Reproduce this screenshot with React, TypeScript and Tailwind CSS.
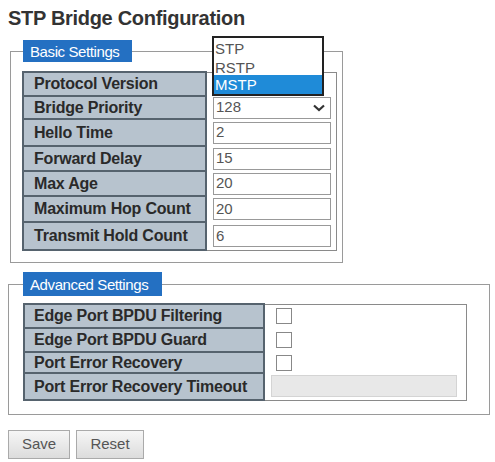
import React from 'react';

const BASIC_ROWS = [
  { label: 'Protocol Version', value: '', kind: 'proto', h: 'h-[24px]' },
  { label: 'Bridge Priority', value: '128', kind: 'select', h: 'h-[23px]' },
  { label: 'Hello Time', value: '2', kind: 'input', h: 'h-[27px]' },
  { label: 'Forward Delay', value: '15', kind: 'input', h: 'h-[25px]' },
  { label: 'Max Age', value: '20', kind: 'input', h: 'h-[25px]' },
  { label: 'Maximum Hop Count', value: '20', kind: 'input', h: 'h-[26px]' },
  { label: 'Transmit Hold Count', value: '6', kind: 'input', h: 'h-[28px]' },
];

const ADVANCED_ROWS = [
  { label: 'Edge Port BPDU Filtering', kind: 'check', h: 'h-[24px]' },
  { label: 'Edge Port BPDU Guard', kind: 'check', h: 'h-[24px]' },
  { label: 'Port Error Recovery', kind: 'check', h: 'h-[21px]' },
  { label: 'Port Error Recovery Timeout', kind: 'disabled', h: 'h-[27px]' },
];

function Legend({ children, className }: { children: React.ReactNode; className: string }) {
  return (
    <legend className={`bg-[#2470c2] text-white text-[15px] leading-none tracking-[-0.4px] px-[7px] ${className}`}>
      {children}
    </legend>
  );
}

function ProtocolList() {
  // open dropdown list overlaying the select
  return (
    <div className="absolute left-[5px] bottom-0 w-[112px] h-[60px] bg-white border-2 border-[#222] flex flex-col text-[15px] leading-none text-[#555] z-10">
      <div className="h-[18px] pl-[1px] flex items-end">STP</div>
      <div className="h-[19px] pl-[1px] flex items-end">RSTP</div>
      <div className="flex-1 pl-[1px] flex items-center bg-[#1f8bd8] text-white">MSTP</div>
    </div>
  );
}

export default function App() {
  return (
    <div className="w-[495px] h-[462px] bg-white pl-2 pt-[5px] overflow-hidden" style={{ fontFamily: '"Liberation Sans", Arial, sans-serif' }}>
      <h1 className="text-[20px] font-bold text-[#333] leading-[26px] tracking-[-0.3px]">STP Bridge Configuration</h1>

      {/* Basic settings */}
      <fieldset className="mt-[9px] ml-[2px] w-[333px] border border-[#9a9a9a] pl-[11px] pb-[11px]">
        <Legend className="ml-[1px] h-[22px] w-[109px] pt-[4px]">Basic Settings</Legend>
        <table className="mt-[9px] w-[315px] border-collapse border border-[#8a8a8a]">
          <tbody>
            {BASIC_ROWS.map(r => (
              <tr key={r.label} className={r.h}>
                <td className="w-[183px] bg-[#b7c3ce] border-2 border-[#56636e] pl-[10px] text-[16px] font-bold text-[#2a2a2a] leading-none whitespace-nowrap tracking-[-0.2px]">{r.label}</td>
                <td className="relative bg-white pl-[6px] pr-[5px] border-l-2 border-[#56636e]">
                  {r.kind === 'proto' && <ProtocolList />}
                  {r.kind === 'select' && (
                    <div className="h-[22px] border border-[#999] flex items-center justify-between px-[2px] text-[15px] text-[#555]">
                      <span>{r.value}</span>
                      <svg width="12" height="8" viewBox="0 0 12 8" className="mr-[3px]">
                        <path d="M1 1.5 L6 6 L11 1.5" fill="none" stroke="#333" strokeWidth="2.2" />
                      </svg>
                    </div>
                  )}
                  {r.kind === 'input' && (
                    <div className="h-[22px] border border-[#999] flex items-center px-[2px] text-[15px] text-[#555]">{r.value}</div>
                  )}
                </td>
              </tr>
            ))}
          </tbody>
        </table>
      </fieldset>

      {/* Advanced settings */}
      <fieldset className="mt-[9px] w-[482px] border border-[#9a9a9a] pl-[14px] pb-[13px]">
        <Legend className="ml-0 h-[24px] w-[139px] pt-[5px]">Advanced Settings</Legend>
        <table className="mt-[7px] w-[444px] border-collapse border border-[#8a8a8a]">
          <tbody>
            {ADVANCED_ROWS.map(r => (
              <tr key={r.label} className={r.h}>
                <td className="w-[240px] bg-[#b7c3ce] border-2 border-[#56636e] pl-[9px] text-[16px] font-bold text-[#2a2a2a] leading-none whitespace-nowrap tracking-[-0.2px]">{r.label}</td>
                <td className="bg-white pl-[11px] pr-[9px] border-l-2 border-[#56636e]">
                  {r.kind === 'check' ? (
                    <div className="w-[16px] h-[16px] border border-[#888] bg-white" />
                  ) : (
                    <div className="h-[22px] ml-[-5px] bg-[#e8e8e8] border border-[#d4d4d4]" />
                  )}
                </td>
              </tr>
            ))}
          </tbody>
        </table>
      </fieldset>

      <div className="flex gap-[6px] mt-[15px]">
        <button className="w-[62px] h-[29px] border border-[#aaa] bg-gradient-to-b from-[#f6f6f6] to-[#dcdcdc] text-[15px] text-[#555]">Save</button>
        <button className="w-[68px] h-[29px] border border-[#aaa] bg-gradient-to-b from-[#f6f6f6] to-[#dcdcdc] text-[15px] text-[#555]">Reset</button>
      </div>
    </div>
  );
}
